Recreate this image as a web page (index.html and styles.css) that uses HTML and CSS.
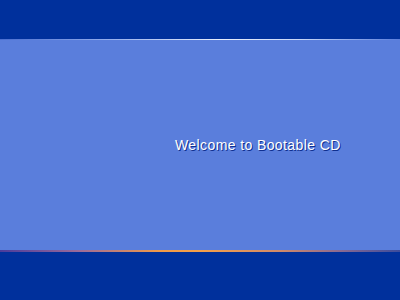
FILE: index.html
```html
<!DOCTYPE html>
<html lang="en">
<head>
  <meta charset="UTF-8">
  <title>Welcome</title>
  <link rel="stylesheet" href="styles.css">
</head>
<body>
  <div class="screen">
    <div class="top-bar"></div>
    <div class="top-line"></div>
    <div class="main">
      <p class="welcome">Welcome to Bootable CD</p>
    </div>
    <div class="bottom-line"></div>
    <div class="bottom-bar"></div>
  </div>
</body>
</html>
```

FILE: styles.css
```css
* {
  margin: 0;
  padding: 0;
  box-sizing: border-box;
}

body {
  font-family: "Liberation Sans", Arial, sans-serif;
  background: #00309c;
}

.screen {
  display: flex;
  flex-direction: column;
  width: 400px;
  height: 300px;
}

.top-bar {
  height: 39px;
  background: #00309c;
}

.top-line {
  height: 1px;
  background: linear-gradient(to right, #4a6ed0 0%, #8ea8ea 25%, #e8eefc 55%, #c8d6f6 75%, #5a7edc 100%);
}

.main {
  flex: 1;
  background: #5a7edc;
  padding: 97px 0 0 175px;
}

.welcome {
  color: #ffffff;
  font-size: 14px;
  line-height: 16px;
  letter-spacing: 0.4px;
  text-shadow: 1px 1px 0 #0f2f8f;
}

.bottom-line {
  height: 2px;
  background: linear-gradient(to right, #4a3c9c 0%, #9c6c9a 20%, #f09a48 40%, #f4a04a 50%, #d08a6a 70%, #8a6a92 85%, #3c4c9c 100%);
}

.bottom-bar {
  height: 48px;
  background: #00309c;
}
```
